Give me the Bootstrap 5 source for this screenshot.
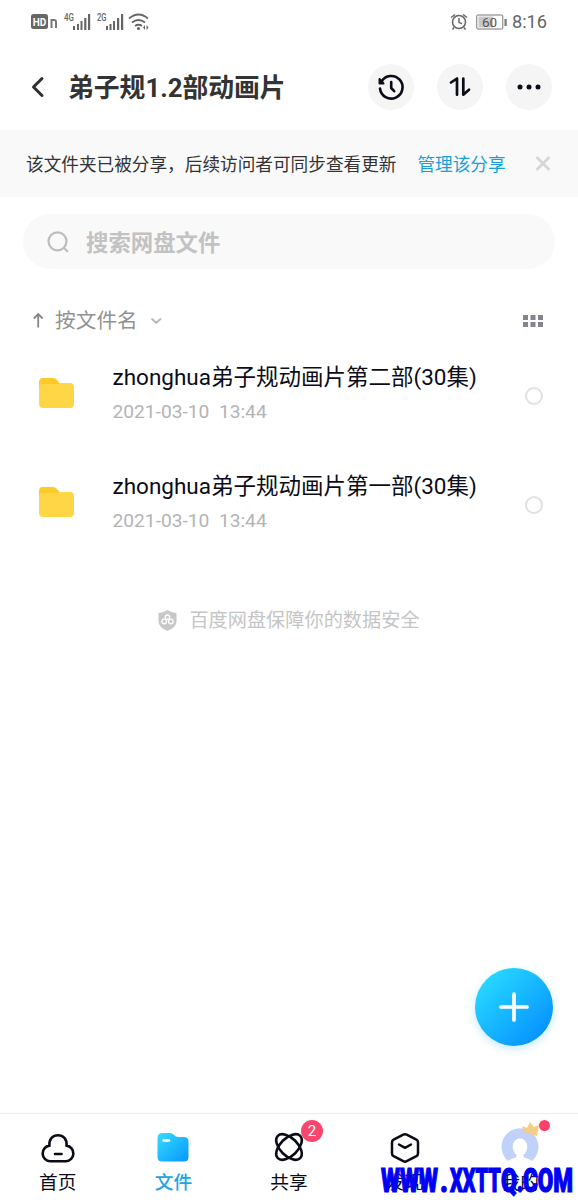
<!DOCTYPE html>
<html lang="zh-CN">
<head>
<meta charset="utf-8">
<meta name="viewport" content="width=device-width, initial-scale=1">
<title>弟子规1.2部动画片</title>
<link href="https://cdn.jsdelivr.net/npm/bootstrap@5.3.0/dist/css/bootstrap.min.css" rel="stylesheet">
<style>
body{font-family:Roboto,"Noto Sans CJK SC",sans-serif;color:#0b0c18;background:#fff;line-height:1.2}
svg{display:block;flex-shrink:0;overflow:visible}
.screen{width:578px;height:1200px}
.status{height:44px;padding:0 31px;color:#666}
.clock{font-size:18.2px}
.topbar{height:86px;padding:0 26px 0 30px}
.topbar h1{font-size:25.8px;font-weight:700;color:#333;margin-left:23px;padding-top:2px}
.tool{width:46px;height:46px;background:#f5f5f6;color:#0b0c18}
.notice{height:67px;background:#f9f9f9;padding:1px 27px 0 26px;font-size:17.65px;color:#333}
.notice span,.notice a{padding-top:3px}
.notice a{color:#17a0da;margin-left:21px}
.finder{height:55px;margin:17px 23px 0;background:#f9f9f9;padding:1px 24px 0;font-size:22.4px;font-weight:700;color:#c2c2c2}
.finder span{margin-left:17px;padding-top:2px}
.sorter{height:40px;margin-top:32px;padding:0 35px 0 33px;font-size:20.7px;color:#929292}
.sorter span{margin-left:11px;padding-top:1px}
.entries{margin-top:-2px}
.entry{height:109px;padding:0 35px 0 39px}
.entry-icon{margin-top:-2px}
.entry-name{font-size:22.5px;line-height:30px;margin-bottom:7px}
.entry-date{font-size:19.2px;line-height:26px;color:#b3b3b7}
.pick{width:18.5px;height:18.5px;border:2.5px solid #e1e1e3;margin-top:5px}
.safe{height:30px;font-size:19.2px;color:#c5c5c5;margin-top:48px}
.safe span{margin-left:12px;padding-top:2px}
.fab{width:78px;height:78px;right:25px;top:968px;background:linear-gradient(135deg,#29dcff 8%,#0590ff 90%);box-shadow:0 3px 9px #9fdcff99}
.tabs{height:87px;border-top:1px solid #ececee;font-size:18.7px}
.tab{padding-top:16px}
.tab svg{height:36px}
.tab-name{line-height:24px;margin-top:5px}
.tab.on{color:#21a5df;font-weight:500}
.count{width:22px;height:22px;left:30px;top:-10px;background:#f9466d;font-size:15px}
.dot{width:11px;height:11px;left:77px;top:6px;background:#fa416b}
.stamp{left:380px;top:1160px}
</style>
</head>
<body>
<div class="screen position-relative overflow-hidden d-flex flex-column">
  <div class="status d-flex align-items-center justify-content-between">
    <svg width="119" height="26" viewBox="0 0 119 26">
      <rect x="0" y="5" width="17" height="15" rx="2.5" fill="#666"/>
      <text x="1.8" y="16.6" font-size="11" font-weight="700" fill="#fff" textLength="13.5" lengthAdjust="spacingAndGlyphs">HD</text>
      <path d="M20.500 19v-8h2.500q2 0 2 2v6" stroke="#777" stroke-width="2" fill="none"/>
      <g fill="#666"><text x="33" y="12" font-size="10" font-weight="500" textLength="10" lengthAdjust="spacingAndGlyphs">4G</text>
      <text x="66" y="12" font-size="10" font-weight="500" textLength="9.500" lengthAdjust="spacingAndGlyphs">2G</text>
      <path d="M42 17h2v4h-2zM46 15h2v6h-2zM49.500 12h2v9h-2zM53.200 9h2.200v12h-2.200zM57 5h2.200v16H57zM75 17h2v4h-2zM78.500 15h2v6h-2zM82 12h2v9h-2zM86 9h2.200v12H86zM90 5h2.200v16H90z"/></g>
      <g fill="none" stroke="#666" stroke-width="1.8"><path d="M98 9.500q9.500-8 19 0M101 13.500q6.500-5 13 0M104 17q3.500-2.500 7 0"/></g>
      <circle cx="107.500" cy="19.500" r="1.600" fill="#666"/><path d="m114 16-2 2.500 2 2.500zM115.500 16l2 2.500-2 2.500z" fill="#666"/>
    </svg>
    <div class="d-flex align-items-center">
      <svg width="18" height="19" viewBox="0 0 18 19" fill="none" stroke="#666" stroke-width="1.500"><circle cx="9" cy="9" r="6.500"/><path d="M9 5v4.300l3 1.500M1 4.500l4-3M17 4.500l-4-3M4 14.500 2.500 16.500M14 14.500l1.500 2"/></svg>
      <svg class="ms-2" width="32" height="17" viewBox="0 0 32 17"><rect x=".75" y="1" width="26" height="14" rx="1" fill="#fff" stroke="#777"/><path d="M2.500 2.500h14.500v11H2.500z" fill="#c8c8c8"/><path d="M28.500 5h2.200v7h-2.200z" fill="#777"/><text x="6" y="13" font-size="13.500" fill="#555">60</text></svg>
      <span class="clock ms-1">8:16</span>
    </div>
  </div>

  <header class="topbar d-flex align-items-center">
    <svg width="15" height="22" viewBox="0 0 15 22" fill="none" stroke="#303030" stroke-width="3" stroke-linecap="round" stroke-linejoin="round"><path d="M12 2.500 3.500 11l8.500 8.500"/></svg>
    <h1 class="mb-0 me-auto">弟子规1.2部动画片</h1>
    <div class="d-flex" style="gap:23px">
      <span class="tool rounded-circle d-flex align-items-center justify-content-center"><svg width="28" height="28" viewBox="0 0 28 28" fill="none" stroke="currentColor" stroke-width="2.600" stroke-linecap="round" stroke-linejoin="round"><path d="M4.500 8.500A11.300 11.300 0 1 1 3 15.500"/><path d="M2.500 6v4.500h4z" fill="currentColor" stroke-width="2"/><path d="M14.200 9v6l3 3.200"/></svg></span>
      <span class="tool rounded-circle d-flex align-items-center justify-content-center"><svg width="22" height="20" viewBox="0 0 22 20" fill="none" stroke="currentColor" stroke-width="2.700" stroke-linecap="round" stroke-linejoin="round"><path d="M2 5.500 8 1.500v16.200M14.300 1.500v16.200l5.700-5"/></svg></span>
      <span class="tool rounded-circle d-flex align-items-center justify-content-center"><svg width="24" height="6" viewBox="0 0 24 6" fill="currentColor"><circle cx="3" cy="3" r="2.500"/><circle cx="12" cy="3" r="2.500"/><circle cx="21" cy="3" r="2.500"/></svg></span>
    </div>
  </header>

  <div class="notice d-flex align-items-center text-nowrap">
    <span>该文件夹已被分享，后续访问者可同步查看更新</span>
    <a class="text-decoration-none" href="#">管理该分享</a>
    <svg class="ms-auto" width="16" height="16" viewBox="0 0 16 16" stroke="#d6d6d6" stroke-width="2.600"><path d="m1.500 1 13 13M14.500 1l-13 13"/></svg>
  </div>

  <div class="finder rounded-pill d-flex align-items-center">
    <svg width="22" height="22" viewBox="0 0 22 22" fill="none" stroke="#bdbdbd" stroke-width="2.200" stroke-linecap="round"><circle cx="10.500" cy="10.300" r="9"/><path d="m17.300 17.200 3 3"/></svg>
    <span>搜索网盘文件</span>
  </div>

  <div class="sorter d-flex align-items-center">
    <svg width="11" height="16" viewBox="0 0 11 16" fill="none" stroke="#888" stroke-width="1.800"><path d="M5.200 14.500V1M.8 5.500 5.200 1l4.500 4.500"/></svg>
    <span>按文件名</span>
    <svg style="margin-left:12px" width="12" height="8" viewBox="0 0 12 8" fill="none" stroke="#bbb" stroke-width="2"><path d="m1.500 1.500 4.700 4.300L11 1.500"/></svg>
    <svg class="ms-auto" width="20" height="13" viewBox="0 0 20 13" fill="#85858f"><path d="M0 0h5v5H0zM7.500 0h5v5h-5zM15 0h5v5h-5zM0 7h5v5H0zM7.500 7h5v5h-5zM15 7h5v5h-5z"/></svg>
  </div>

  <main class="entries">
    <div class="entry d-flex align-items-center">
      <svg class="entry-icon" width="35" height="30" viewBox="0 0 35 30"><path d="M0 4q0-4 4-4h10q2.500 0 4 2l3 3.500V16H0z" fill="#ffc927"/><path d="M0 10q0-4 4-4h12c3 0 4-1 6-1h9q4 0 4 4v17q0 4-4 4H4q-4 0-4-4z" fill="#ffd646"/></svg>
      <div class="flex-grow-1 text-nowrap" style="margin-left:38.5px"><div class="entry-name">zhonghua弟子规动画片第二部(30集)</div><div class="entry-date">2021-03-10&nbsp; 13:44</div></div>
      <span class="pick rounded-circle"></span>
    </div>
    <div class="entry d-flex align-items-center">
      <svg class="entry-icon" width="35" height="30" viewBox="0 0 35 30"><path d="M0 4q0-4 4-4h10q2.500 0 4 2l3 3.500V16H0z" fill="#ffc927"/><path d="M0 10q0-4 4-4h12c3 0 4-1 6-1h9q4 0 4 4v17q0 4-4 4H4q-4 0-4-4z" fill="#ffd646"/></svg>
      <div class="flex-grow-1 text-nowrap" style="margin-left:38.5px"><div class="entry-name">zhonghua弟子规动画片第一部(30集)</div><div class="entry-date">2021-03-10&nbsp; 13:44</div></div>
      <span class="pick rounded-circle"></span>
    </div>
    <div class="safe d-flex align-items-center justify-content-center">
      <svg width="19" height="21" viewBox="0 0 20 22"><path d="M10 0q4 3 9.500 3v9q0 6-9.500 10Q.5 18 .5 12V3Q6 3 10 0z" fill="#c8c8c8"/><g fill="none" stroke="#fff" stroke-width="1.400"><circle cx="10" cy="7.500" r="2.300"/><circle cx="6.500" cy="12" r="2.400"/><circle cx="13.500" cy="12" r="2.400"/></g></svg>
      <span>百度网盘保障你的数据安全</span>
    </div>
  </main>

  <button class="fab position-absolute rounded-circle border-0 p-0 d-flex align-items-center justify-content-center" aria-label="添加">
    <svg width="30" height="30" viewBox="0 0 30 30" stroke="#fff" stroke-width="3.700" stroke-linecap="round"><path d="M15 2v26M2 15h26"/></svg>
  </button>

  <nav class="tabs row g-0 mt-auto text-center">
    <div class="tab col">
      <svg class="mx-auto" width="36" viewBox="0 0 36 36" fill="none" stroke="#0b0c18" stroke-width="2.600" stroke-linecap="round"><path d="M10 31.300a7.900 7.900 0 0 1-.6-15.700C9 9 12.800 5.300 18 5.300S27 9 26.600 15.600A7.900 7.900 0 0 1 26 31.300z"/><path d="M15 24h6.500"/></svg>
      <div class="tab-name">首页</div>
    </div>
    <div class="tab on col">
      <svg class="mx-auto" width="36" viewBox="0 0 36 36"><defs><linearGradient id="blue" x1="0" y1="0" x2="1" y2="1"><stop stop-color="#36dcff"/><stop offset="1" stop-color="#0796ff"/></linearGradient></defs><path d="M2.500 8q0-5 5-5h7q3 0 4.500 2t4 2H29q4.500 0 4.500 4.500V27q0 4.500-4.500 4.500H7q-4.500 0-4.500-4.500z" fill="url(#blue)"/><path d="M8.500 10.500H14" stroke="#fff" stroke-width="2.400" stroke-linecap="round"/></svg>
      <div class="tab-name">文件</div>
    </div>
    <div class="tab col">
      <div class="position-relative mx-auto" style="width:36px">
        <svg width="36" viewBox="0 0 36 36" fill="none" stroke="#0b0c18" stroke-width="2.600"><ellipse cx="18" cy="17" rx="15.800" ry="8.800" transform="rotate(45 18 17)"/><ellipse cx="18" cy="17" rx="15.800" ry="8.800" transform="rotate(-45 18 17)"/></svg>
        <span class="count position-absolute rounded-circle text-white d-flex align-items-center justify-content-center">2</span>
      </div>
      <div class="tab-name">共享</div>
    </div>
    <div class="tab col">
      <svg class="mx-auto" width="36" viewBox="0 0 36 36" fill="none" stroke="#0b0c18" stroke-width="2.500" stroke-linecap="round" stroke-linejoin="round"><path d="M16.300 4.600 6.600 9.700q-1.600.9-1.600 2.700v11q0 1.800 1.600 2.700l9.700 5.100q1.700.9 3.400 0l9.700-5.100q1.600-.9 1.600-2.700v-11q0-1.800-1.600-2.700l-9.700-5.100q-1.700-.9-3.400 0z"/><path d="m12 14.500 6 3.300 6-3.300"/></svg>
      <div class="tab-name">发现</div>
    </div>
    <div class="tab col position-relative">
      <svg class="mx-auto" width="38" viewBox="0 0 38 36"><path d="M7.500 31.300A18.500 18.500 0 1 1 30.500 31.300z" fill="#c0d1fa"/><ellipse cx="19" cy="17" rx="7.300" ry="8.800" fill="#fff"/><path d="M6 32q3-3.500 9-4.500l1-4h6l1 4q6 1 9 4.500z" fill="#fff"/><path d="m21-4 5 2 3-6 4 5 5-2-2 11-13-4z" fill="#f5cd85"/></svg>
      <span class="dot position-absolute rounded-circle"></span>
      <div class="tab-name">我的</div>
    </div>
  </nav>

  <svg class="stamp position-absolute" width="194" height="40" viewBox="0 0 194 40"><text x="1" y="32" font-family="Roboto, sans-serif" font-size="33" font-weight="900" fill="#0000f5" stroke="#0000f5" stroke-width="1.200"><tspan textLength="57" lengthAdjust="spacingAndGlyphs">WWW</tspan><tspan x="60" textLength="8" lengthAdjust="spacingAndGlyphs">.</tspan><tspan x="70" textLength="51" lengthAdjust="spacingAndGlyphs">XXTT</tspan><tspan x="121" textLength="16" lengthAdjust="spacingAndGlyphs">Q</tspan><tspan x="137" textLength="6" lengthAdjust="spacingAndGlyphs">.</tspan><tspan x="143" textLength="50" lengthAdjust="spacingAndGlyphs">COM</tspan></text></svg>
</div>
<script src="https://cdn.jsdelivr.net/npm/bootstrap@5.3.0/dist/js/bootstrap.bundle.min.js"></script>
</body>
</html>
